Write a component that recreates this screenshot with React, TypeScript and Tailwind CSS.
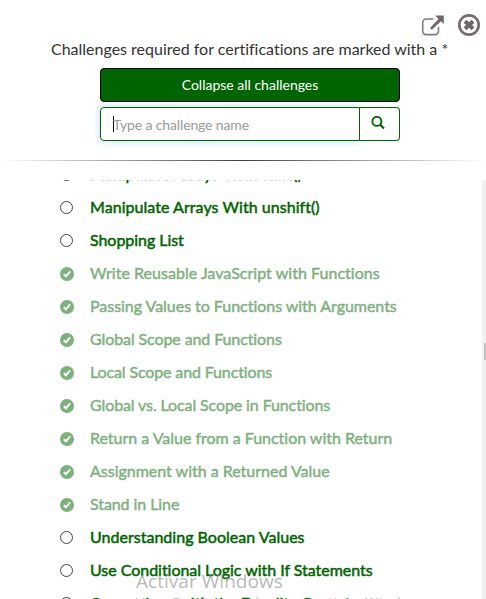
import React from "react";

type Challenge = { title: string; done: boolean; spacing: string };

const challenges: Challenge[] = [
  { title: "Manipulate Arrays With shift()", done: false, spacing: "tracking-[0.05px]" },
  { title: "Manipulate Arrays With unshift()", done: false, spacing: "tracking-[0.05px]" },
  { title: "Shopping List", done: false, spacing: "tracking-[-0.05px]" },
  { title: "Write Reusable JavaScript with Functions", done: true, spacing: "tracking-[0.035px]" },
  { title: "Passing Values to Functions with Arguments", done: true, spacing: "tracking-[-0.03px]" },
  { title: "Global Scope and Functions", done: true, spacing: "tracking-[-0.1px]" },
  { title: "Local Scope and Functions", done: true, spacing: "tracking-[-0.13px]" },
  { title: "Global vs. Local Scope in Functions", done: true, spacing: "tracking-[-0.11px]" },
  { title: "Return a Value from a Function with Return", done: true, spacing: "tracking-[-0.02px]" },
  { title: "Assignment with a Returned Value", done: true, spacing: "tracking-[-0.01px]" },
  { title: "Stand in Line", done: true, spacing: "tracking-[-0.08px]" },
  { title: "Understanding Boolean Values", done: false, spacing: "tracking-[0.02px]" },
  { title: "Use Conditional Logic with If Statements", done: false, spacing: "tracking-[-0.03px]" },
  { title: "Comparison with the Equality Operator", done: false, spacing: "tracking-[0.02px]" },
];

function OpenIcon() {
  return (
    <svg width="24" height="22" viewBox="0 0 24 22" fill="none">
      <path d="M12.5 4H5A3.3 3.3 0 0 0 1.7 7.3v9a3.3 3.3 0 0 0 3.3 3.3h9.2a3.3 3.3 0 0 0 3.3-3.3v-4.2" stroke="#827a7c" strokeWidth="1.6" />
      <path d="M14.2 0.5H22.8V9L20 6.3 10.9 14.8 9 12.9 17.5 3.9Z" fill="#6f6668" />
    </svg>
  );
}

function CloseIcon() {
  return (
    <svg width="24" height="24" viewBox="0 0 24 24" fill="none">
      <circle cx="12" cy="12" r="9.7" stroke="#756c6e" strokeWidth="2.7" />
      <path d="M8 8.2 16 15.8M16 8.2 8 15.8" stroke="#6f6668" strokeWidth="4" />
    </svg>
  );
}

function SearchIcon() {
  return (
    <svg width="14" height="14" viewBox="0 0 14 14" fill="none" stroke="#006400">
      <circle cx="5.9" cy="5.4" r="4.5" strokeWidth="1.9" />
      <path d="M9.2 8.8l3.8 3.8" strokeWidth="2.1" />
    </svg>
  );
}

function StatusIcon({ done }: { done: boolean }) {
  return done ? (
    <svg className="block" width="14" height="14" viewBox="0 0 14 14" fill="none">
      <circle cx="7" cy="7" r="7" fill="#006400" />
      <path d="M3.8 7.3 5.9 9.3 10.1 4.4" stroke="#fff" strokeWidth="2" />
    </svg>
  ) : (
    <svg className="block" width="14" height="14" viewBox="0 0 14 14" fill="none">
      <circle cx="6.5" cy="6.5" r="6" stroke="#303038" strokeWidth="0.9" />
    </svg>
  );
}

export default function App() {
  return (
    <div className="relative flex h-[599px] w-[486px] flex-col overflow-hidden bg-white font-['Lato',sans-serif] text-[#333]">
      <header className="flex h-[180px] shrink-0 flex-col">
        <div className="flex h-[38px] justify-end gap-3 pr-[5px] pt-[13px]">
          <div className="pt-[2px]"><OpenIcon /></div>
          <CloseIcon />
        </div>
        <p className="ml-[51px] -mt-px mb-px whitespace-nowrap text-[16px] leading-[23px] tracking-[-0.005px]">
          Challenges required for certifications are marked with a *
        </p>
        <button className="ml-[100px] mt-[7px] h-[34px] w-[300px] rounded border border-black bg-[#006400] text-[14px] leading-[20px] text-white">
          Collapse all challenges
        </button>
        <div className="ml-[100px] mt-[5px] flex h-[34px] w-[300px]">
          <div className="flex w-[260px] items-center rounded-l border border-[#006400] pl-3 text-[14px] tracking-[-0.13px] text-[#999] shadow-[0_0_8px_rgba(102,175,233,0.45)]">
            <span className="-mr-px h-4 w-px bg-black" />
            <span>Type a challenge name</span>
          </div>
          <div className="flex w-10 justify-center rounded-r border border-l-0 border-[#006400] bg-white pr-[3px] pt-[8px]">
            <SearchIcon />
          </div>
        </div>
        <div className="mt-[19px] h-px bg-linear-to-r from-transparent via-black/75 to-transparent" />
      </header>
      <main className="flex min-h-0 flex-1">
        <ul className="h-[419px] w-[482px] overflow-hidden">
          {challenges.map((c, i) => (
            <li
              key={c.title}
              className={`flex h-[33px] items-center pl-[60px] text-[16px] text-[#006400] ${i === 0 ? "-mt-[22px]" : ""} ${c.done ? "opacity-50" : ""}`}
            >
              <StatusIcon done={c.done} />
              <span className={`ml-4 whitespace-nowrap pb-[2px] [font-variant-ligatures:none] [-webkit-text-stroke:0.5px_#006400] ${c.spacing}`}>{c.title}</span>
            </li>
          ))}
        </ul>
        <div className="w-1 bg-[#f1f1f1] pl-[2px] pt-[163px]">
          <div className="h-[17px] bg-[#c1c1c1]" />
        </div>
      </main>
      <div className="absolute left-[136px] top-[568px] whitespace-nowrap font-['Open_Sans',sans-serif] text-[#999]/70">
        <div className="text-[19px] leading-[27px] tracking-[0.04px]">Activar Windows</div>
        <div className="-mt-px text-[14px] leading-[18px] tracking-[0.7px]">Ve a Configuración para activar Windows.</div>
      </div>
    </div>
  );
}
